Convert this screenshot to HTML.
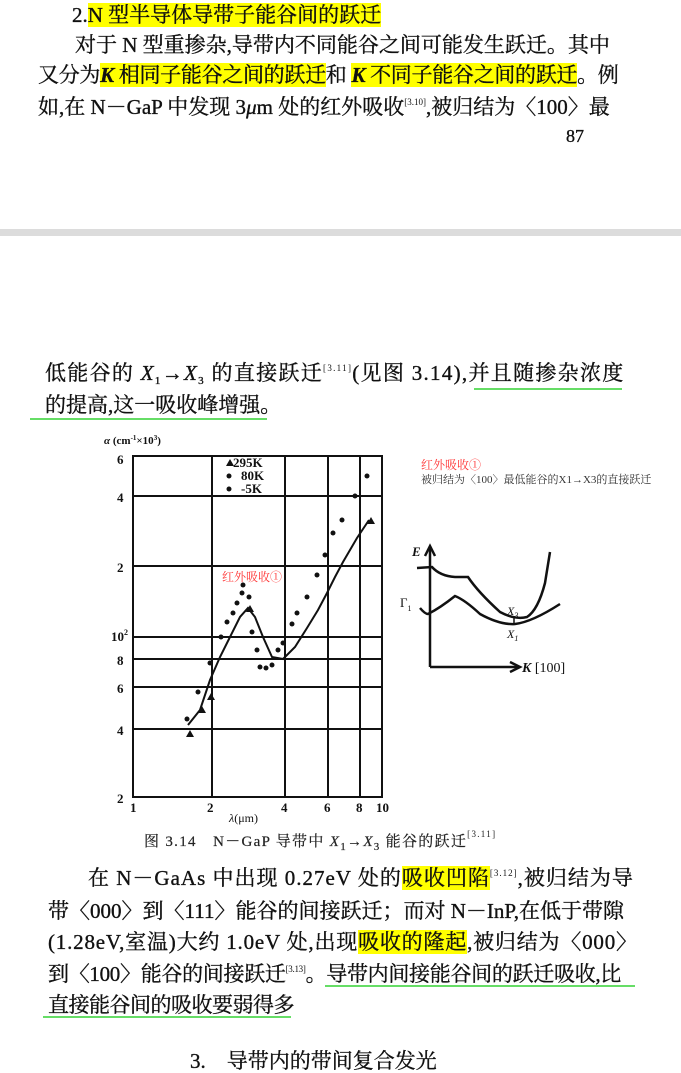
<!DOCTYPE html>
<html><head><meta charset="utf-8"><style>
body{margin:0;width:681px;height:1056px;background:#fff;position:relative;overflow:hidden;font-family:"Liberation Serif","Noto Serif CJK SC",serif;color:#111}
.l{position:absolute;white-space:nowrap;font-size:21px;line-height:24px;height:24px;-webkit-text-stroke:0.35px #111}
.hl{background:#ffff00}
sup{font-size:9px;line-height:0;vertical-align:baseline;position:relative;top:-9px;-webkit-text-stroke:0}
sub{font-size:11px;line-height:0;vertical-align:baseline;position:relative;top:4px}
i{font-style:italic}
.ul{position:absolute;height:2px;background:#66dd66}
</style></head><body>
<div class="l" style="left:72px;top:3px;font-size:21px">2.<span class="hl">N 型半导体导带子能谷间的跃迁</span></div>
<div class="l" style="left:75px;top:33px">对于 N 型重掺杂,导带内不同能谷之间可能发生跃迁。其中</div>
<div class="l" style="left:38px;top:63px;letter-spacing:-0.3px">又分为<span class="hl"><b><i>K</i></b> 相同子能谷之间的跃迁</span>和 <span class="hl"><b><i>K</i></b> 不同子能谷之间的跃迁</span>。例</div>
<div class="l" style="left:38px;top:95px">如,在 N－GaP 中发现 3<i>μ</i>m 处的红外吸收<sup>[3.10]</sup>,被归结为〈100〉最</div>
<div class="l" style="left:566px;top:124px;font-size:18px">87</div>
<div style="position:absolute;left:0;top:229px;width:681px;height:7px;background:#dcdcdc"></div>

<div class="l" style="left:45px;top:361px;letter-spacing:1.3px">低能谷的 <i>X</i><sub>1</sub>→<i>X</i><sub>3</sub> 的直接跃迁<sup>[3.11]</sup>(见图 3.14),并且随掺杂浓度</div>
<div class="ul" style="left:474px;top:388px;width:148px"></div>
<div class="l" style="left:45px;top:393px">的提高,这一吸收峰增强。</div>
<div class="ul" style="left:30px;top:418px;width:237px"></div>

<svg style="position:absolute;left:0;top:0" width="681" height="1056">
<g stroke="#111" fill="none">
<rect x="133" y="456" width="249" height="341" stroke-width="2"/>
<g stroke-width="2">
<line x1="212" y1="456" x2="212" y2="797"/><line x1="285" y1="456" x2="285" y2="797"/>
<line x1="328" y1="456" x2="328" y2="797"/><line x1="360" y1="456" x2="360" y2="797"/>
<line x1="133" y1="496" x2="382" y2="496"/><line x1="133" y1="566" x2="382" y2="566"/>
<line x1="133" y1="637" x2="382" y2="637"/><line x1="133" y1="659" x2="382" y2="659"/>
<line x1="133" y1="687" x2="382" y2="687"/><line x1="133" y1="729" x2="382" y2="729"/>
</g>
<polyline stroke-width="2" points="188,725 200,710 210,680 220,657 230,637 240,617 248,608 255,617 263,637 272,657 283,659 295,647 307,628 318,610 327,593 335,577 343,562 357,538 369,520"/>
</g>
<g fill="#111">
<circle cx="187" cy="719" r="2.5"/><circle cx="198" cy="692" r="2.5"/><circle cx="210" cy="663" r="2.5"/><circle cx="221" cy="637" r="2.5"/><circle cx="227" cy="622" r="2.5"/><circle cx="233" cy="613" r="2.5"/><circle cx="237" cy="603" r="2.5"/><circle cx="242" cy="593" r="2.5"/><circle cx="243" cy="585" r="2.5"/><circle cx="249" cy="597" r="2.5"/><circle cx="252" cy="632" r="2.5"/><circle cx="257" cy="650" r="2.5"/><circle cx="260" cy="667" r="2.5"/><circle cx="266" cy="668" r="2.5"/><circle cx="272" cy="665" r="2.5"/><circle cx="278" cy="650" r="2.5"/><circle cx="283" cy="643" r="2.5"/><circle cx="292" cy="624" r="2.5"/><circle cx="297" cy="613" r="2.5"/><circle cx="307" cy="597" r="2.5"/><circle cx="317" cy="575" r="2.5"/><circle cx="325" cy="555" r="2.5"/><circle cx="333" cy="533" r="2.5"/><circle cx="342" cy="520" r="2.5"/><circle cx="355" cy="496" r="2.5"/><circle cx="367" cy="476" r="2.5"/>
<path d="M186 737l4 -7 4 7z M198 713l4-7 4 7z M207 700l4-7 4 7z M246 612l4-7 4 7z M367 524l4-7 4 7z M226 466l4-7 4 7z"/>
</g>
<g font-family="Liberation Serif,serif" font-size="13" font-weight="bold" fill="#111">
<text x="233" y="467">295K</text><text x="241" y="480">80K</text><text x="241" y="493">-5K</text>
<circle cx="229" cy="476" r="2.5"/><circle cx="229" cy="489" r="2.5"/>
<text x="117" y="464">6</text><text x="117" y="502">4</text><text x="117" y="572">2</text><text x="111" y="641">10<tspan font-size="8" dy="-6">2</tspan></text><text x="117" y="665">8</text><text x="117" y="693">6</text><text x="117" y="735">4</text><text x="117" y="803">2</text>
<text x="130" y="812">1</text><text x="207" y="812">2</text><text x="281" y="812">4</text><text x="324" y="812">6</text><text x="356" y="812">8</text><text x="376" y="812">10</text>
<text x="229" y="822" font-weight="normal" font-size="12"><tspan font-style="italic">λ</tspan>(μm)</text>
<text x="104" y="444" font-size="11"><tspan font-style="italic">α</tspan> (cm<tspan font-size="7" dy="-4">-1</tspan><tspan dy="4">×10</tspan><tspan font-size="7" dy="-4">3</tspan><tspan dy="4">)</tspan></text>
</g>
<g stroke="#111" stroke-width="2.5" fill="none">
<line x1="430" y1="667" x2="430" y2="548"/><path d="M425 556l5-10 5 10"/>
<line x1="430" y1="667" x2="518" y2="667"/><path d="M510 662l10 5-10 5"/>
<path d="M417 568 L432 567 Q440 576 455 577 L468 577 Q478 592 500 612 Q515 620 527 617 Q538 610 545 583 L550 552"/>
<path d="M420 608 Q425 614 428 614 Q440 608 455 596 Q465 600 480 614 Q500 625 515 624 Q532 622 560 604"/>
<line x1="514" y1="616" x2="514" y2="624" stroke-width="1.5"/>
</g>
<g font-family="Liberation Serif,serif" fill="#111">
<text x="412" y="556" font-size="13" font-weight="bold" font-style="italic">E</text>
<text x="400" y="607" font-size="13">Γ<tspan font-size="8" dy="4">1</tspan></text>
<text x="507" y="615" font-size="12" font-style="italic">X<tspan font-size="8" dy="3">3</tspan></text>
<text x="507" y="638" font-size="12" font-style="italic">X<tspan font-size="8" dy="3">1</tspan></text>
<text x="522" y="672" font-size="14"><tspan font-weight="bold" font-style="italic">K</tspan> [100]</text>
</g>
</svg>
<div class="l" style="left:421px;top:458px;font-size:12px;line-height:14px;color:#f33;-webkit-text-stroke:0">红外吸收①</div>
<div class="l" style="left:421px;top:473px;font-size:11px;line-height:14px;color:#333;-webkit-text-stroke:0">被归结为〈100〉最低能谷的X1→X3的直接跃迁</div>
<div class="l" style="left:222px;top:570px;font-size:12px;line-height:14px;color:#f33;-webkit-text-stroke:0">红外吸收①</div>

<div class="l" style="left:144px;top:833px;font-size:15px;line-height:18px;color:#222;letter-spacing:1.3px;-webkit-text-stroke:0.2px #222">图 3.14　N－GaP 导带中 <i>X</i><sub>1</sub>→<i>X</i><sub>3</sub> 能谷的跃迁<sup>[3.11]</sup></div>
<div class="l" style="left:88px;top:866px;letter-spacing:1px">在 N－GaAs 中出现 0.27eV 处的<span class="hl">吸收凹陷</span><sup>[3.12]</sup>,被归结为导</div>
<div class="l" style="left:48px;top:899px">带〈000〉到〈111〉能谷的间接跃迁；而对 N－InP,在低于带隙</div>
<div class="l" style="left:48px;top:930px;letter-spacing:0.8px">(1.28eV,室温)大约 1.0eV 处,出现<span class="hl">吸收的隆起</span>,被归结为〈000〉</div>
<div class="l" style="left:48px;top:962px;letter-spacing:-0.3px">到〈100〉能谷的间接跃迁<sup>[3.13]</sup>。导带内间接能谷间的跃迁吸收,比</div>
<div class="ul" style="left:325px;top:985px;width:310px"></div>
<div class="l" style="left:48px;top:993px;letter-spacing:-0.5px">直接能谷间的吸收要弱得多</div>
<div class="ul" style="left:43px;top:1016px;width:248px"></div>
<div class="l" style="left:190px;top:1049px;font-size:21px">3.　导带内的带间复合发光</div>
</body></html>
